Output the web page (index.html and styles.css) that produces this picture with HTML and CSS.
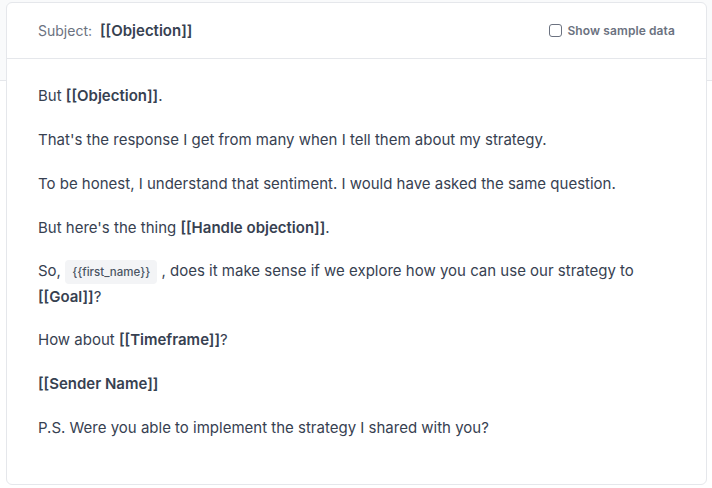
FILE: index.html
```html
<!DOCTYPE html>
<html>
<head>
<meta charset="utf-8">
<link rel="stylesheet" href="styles.css">
</head>
<body>
<div class="page">
  <div class="topband"></div>
  <div class="card">
    <div class="head">
      <div class="subject"><span class="label">Subject:</span><span class="value">[[Objection]]</span></div>
      <label class="toggle"><span class="box"></span><span>Show sample data</span></label>
    </div>
    <div class="body">
      <p>But <b>[[Objection]]</b>.</p>
      <p>That's the response I get from many when I tell them about my strategy.</p>
      <p>To be honest, I understand that sentiment. I would have asked the same question.</p>
      <p>But here's the thing <b>[[Handle objection]]</b>.</p>
      <p class="multi">So, <span class="chip">{{first_name}}</span> , does it make sense if we explore how you can use our strategy to <b>[[Goal]]</b>?</p>
      <p>How about <b>[[Timeframe]]</b>?</p>
      <p><b>[[Sender Name]]</b></p>
      <p>P.S. Were you able to implement the strategy I shared with you?</p>
    </div>
  </div>
</div>
</body>
</html>
```
FILE: styles.css
```css
html, body {
  margin: 0;
  padding: 0;
  background: #ffffff;
}
body {
  font-family: Inter, "Noto Sans", sans-serif;
  color: #374151;
  width: 712px;
  height: 488px;
  overflow: hidden;
}
.page {
  position: relative;
  width: 712px;
  height: 488px;
}
.topband {
  height: 80px;
  background: #f9fafb;
  border-bottom: 1px solid #e5e7eb;
}
.card {
  position: absolute;
  left: 6px;
  top: 2px;
  width: 699px;
  height: 481px;
  background: #fff;
  border: 1px solid #e5e7eb;
  border-radius: 6px;
  box-sizing: content-box;
}
.head {
  height: 55px;
  border-bottom: 1px solid #e5e7eb;
  display: flex;
  align-items: center;
  justify-content: space-between;
  padding: 0 31px;
}
.subject {
  display: flex;
  align-items: baseline;
  gap: 8px;
}
.label {
  font-size: 14px;
  color: #6b7280;
}
.value {
  font-size: 15px;
  font-weight: 600;
  color: #374151;
}
.toggle {
  display: flex;
  align-items: center;
  gap: 5px;
  font-size: 12px;
  font-weight: 600;
  color: #6b7280;
  letter-spacing: 0.1px;
}
.box {
  width: 11px;
  height: 11px;
  border: 1px solid #6b7280;
  border-radius: 3px;
}
.body {
  padding: 25px 31px 0;
  font-size: 15px;
}
.body p {
  margin: 0 0 20px;
  line-height: 24px;
}
.body b {
  font-weight: 600;
}
.body p.multi {
  line-height: 26px;
  margin-top: -2px;
  margin-bottom: 18px;
}
.chip {
  display: inline-block;
  background: #f3f4f6;
  border-radius: 4px;
  font-size: 11.5px;
  font-weight: 500;
  padding: 0 7px;
  height: 24px;
  line-height: 24px;
  vertical-align: middle;
  color: #4b5563;
}
```
